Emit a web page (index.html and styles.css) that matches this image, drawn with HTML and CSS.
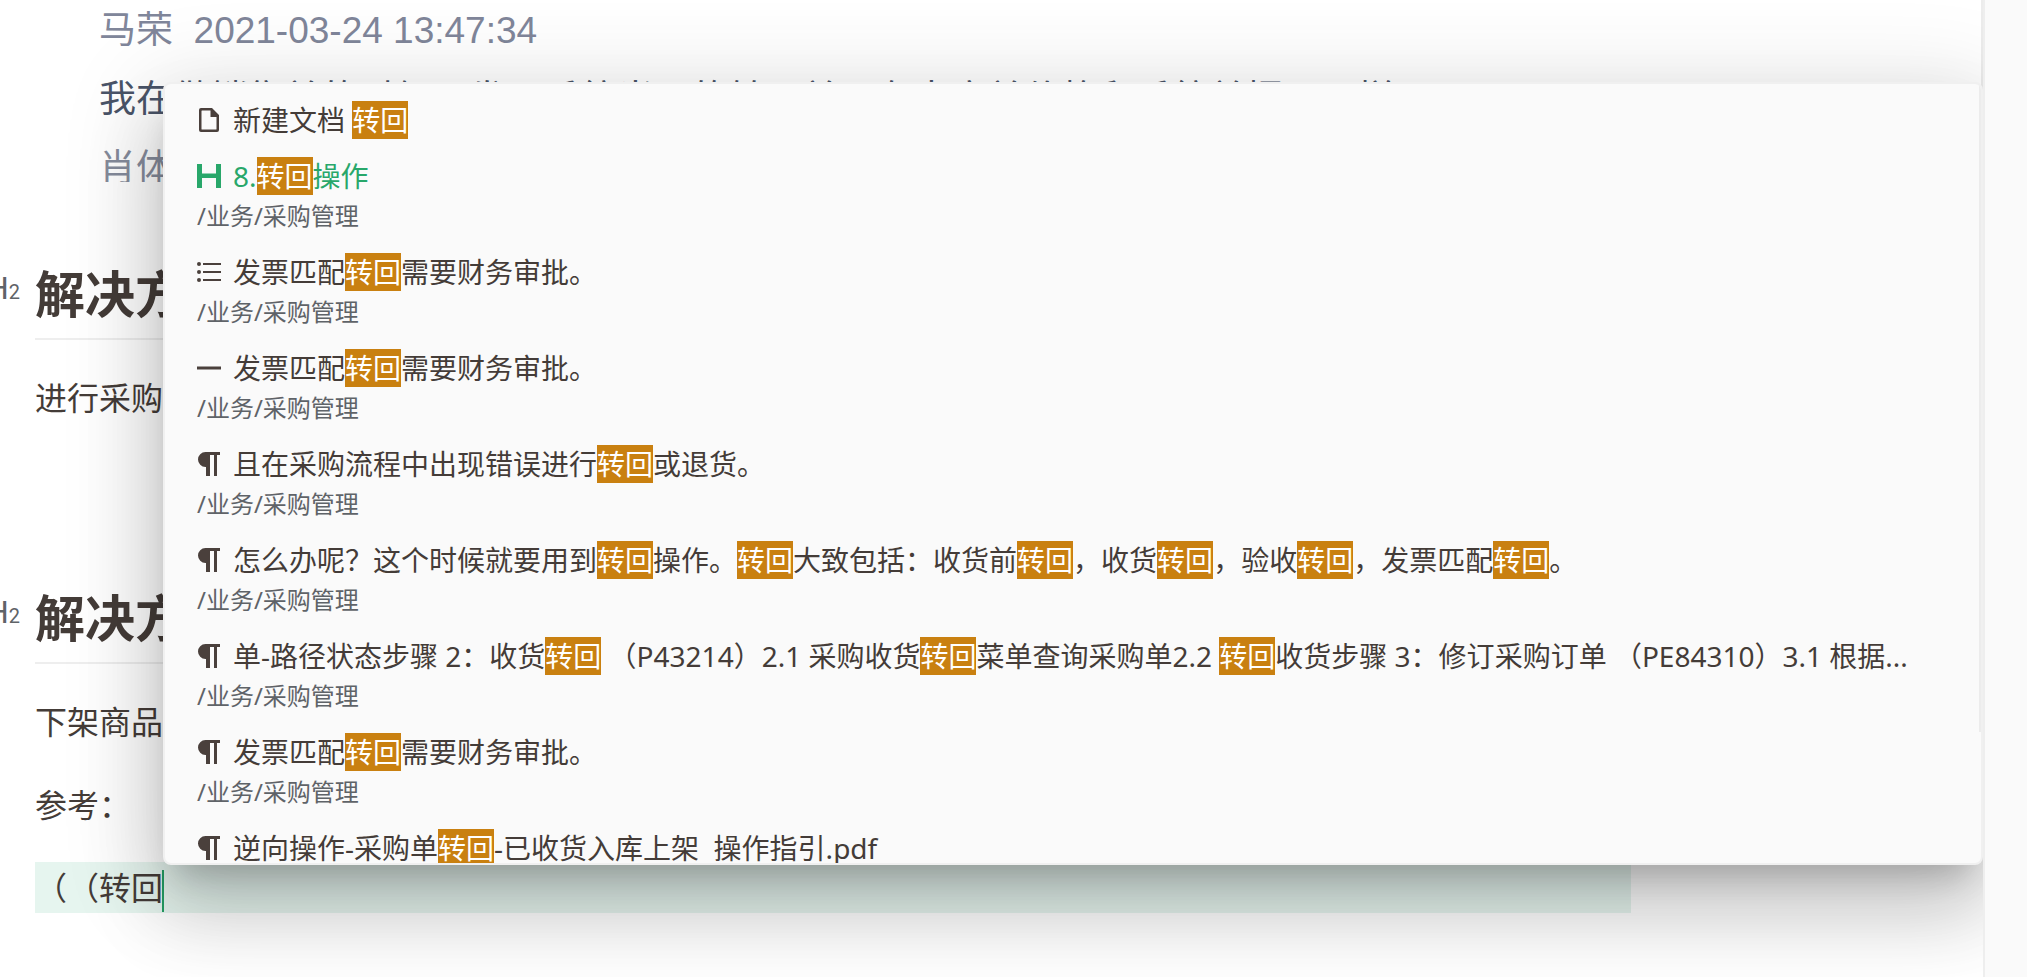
FILE: index.html
```html
<!DOCTYPE html>
<html lang="zh-CN">
<head>
<meta charset="utf-8">
<title>采购管理</title>
<link rel="stylesheet" href="styles.css">
</head>
<body>
<svg class="sprite" aria-hidden="true">
  <symbol id="i-doc" viewBox="0 0 24 24"><path fill-rule="evenodd" d="M4 0h11l7 7v15a2 2 0 0 1-2 2H4a2 2 0 0 1-2-2V2a2 2 0 0 1 2-2zm1 2.500a.5.5 0 0 0-.5.5v18a.5.500 0 0 0 .5.500h14a.5.500 0 0 0 .5-.5V9H13.500V2.500z"/></symbol>
  <symbol id="i-heading" viewBox="0 0 24 24"><path d="M0 0h5v9.500h14V0h5v24h-5v-10H5v10H0z"/></symbol>
  <symbol id="i-list" viewBox="0 0 24 24"><circle cx="2" cy="4" r="2"/><circle cx="2" cy="12" r="2"/><circle cx="2" cy="20" r="2"/><path d="M6 3h18v2H6zM6 11h18v2H6zM6 19h18v2H6z"/></symbol>
  <symbol id="i-item" viewBox="0 0 24 24"><path d="M0 10.500h24v3H0z"/></symbol>
  <symbol id="i-para" viewBox="0 0 24 24"><path d="M8.500 0H23v3h-3v21h-3V3h-4v21h-4V15H8.500a7.500 7.500 0 0 1 0-15z"/></symbol>
</svg>
<main class="editor">
  <article class="doc">
    <div class="quote">
      <p class="quote-meta">马荣&nbsp; 2021-03-24 13:47:34</p>
      <p class="quote-body">我在做销售单的时候，发现系统当月的转回单，有出库单价格和系统单据不一样</p>
      <p class="quote-foot">肖体</p>
    </div>
    <h2><span class="level">H<small>2</small></span>解决方案</h2>
    <p class="para wide">进行采购</p>
    <h2><span class="level">H<small>2</small></span>解决方案</h2>
    <p class="para">下架商品</p>
    <p class="para">参考：</p>
    <p class="para active">（（转回<span class="caret"></span></p>
  </article>
  <div class="thumb"></div>
  <div class="popup">
    <ul class="results">
      <li><button class="line"><svg><use href="#i-doc"/></svg><span>新建文档 <mark>转回</mark></span></button></li>
      <li class="current"><button class="line"><svg><use href="#i-heading"/></svg><span>8.<mark>转回</mark>操作</span></button><div class="path">/业务/采购管理</div></li>
      <li><button class="line"><svg><use href="#i-list"/></svg><span>发票匹配<mark>转回</mark>需要财务审批。</span></button><div class="path">/业务/采购管理</div></li>
      <li><button class="line"><svg><use href="#i-item"/></svg><span>发票匹配<mark>转回</mark>需要财务审批。</span></button><div class="path">/业务/采购管理</div></li>
      <li><button class="line"><svg><use href="#i-para"/></svg><span>且在采购流程中出现错误进行<mark>转回</mark>或退货。</span></button><div class="path">/业务/采购管理</div></li>
      <li><button class="line"><svg><use href="#i-para"/></svg><span>怎么办呢？这个时候就要用到<mark>转回</mark>操作。<mark>转回</mark>大致包括：收货前<mark>转回</mark>，收货<mark>转回</mark>，验收<mark>转回</mark>，发票匹配<mark>转回</mark>。</span></button><div class="path">/业务/采购管理</div></li>
      <li><button class="line"><svg><use href="#i-para"/></svg><span>单-路径状态步骤 2：收货<mark>转回</mark> （P43214）2.1 采购收货<mark>转回</mark>菜单查询采购单2.2 <mark>转回</mark>收货步骤 3：修订采购订单 （PE84310）3.1 根据...</span></button><div class="path">/业务/采购管理</div></li>
      <li><button class="line"><svg><use href="#i-para"/></svg><span>发票匹配<mark>转回</mark>需要财务审批。</span></button><div class="path">/业务/采购管理</div></li>
      <li><button class="line"><svg><use href="#i-para"/></svg><span>逆向操作-采购单<mark>转回</mark>-已收货入库上架&nbsp; 操作指引.pdf</span></button></li>
    </ul>
    <div class="popup-thumb"></div>
  </div>
</main>
<aside class="dock"></aside>
</body>
</html>
```
FILE: styles.css
```css
* { box-sizing: border-box; }
body {
  margin: 0;
  height: 100vh;
  display: flex;
  overflow: hidden;
  background: #fff;
  color: #443c38;
  font-family: "Noto Sans", "Noto Sans CJK SC", sans-serif;
  text-spacing-trim: space-all;
}
p, h2, ul { margin: 0; padding: 0; }
.sprite { position: absolute; width: 0; height: 0; }
.editor { position: relative; flex: 1; overflow: hidden; }
.dock { width: 44px; background: #fafafa; border-left: 2px solid #eee; }
.doc { padding: 0 352px 0 35px; }

.quote {
  height: 182px;
  padding-left: 64px;
  overflow: hidden;
  white-space: nowrap;
  font-family: "Liberation Sans", "Noto Sans CJK SC", sans-serif;
  font-size: 37px;
}
.quote p { line-height: 69px; }
.quote-meta { margin-top: -4px; color: #80869a; }
.quote-body { color: #4a5468; }
.quote-foot { color: #868c9c; }

h2 {
  position: relative;
  margin-top: 70px;
  height: 88px;
  line-height: 84px;
  font-size: 50px;
  border-bottom: 2px solid #eee;
}
.level {
  position: absolute;
  left: -49px;
  top: 20px;
  line-height: 32px;
  font-family: Roboto, sans-serif;
  font-size: 32px;
  font-weight: 400;
  color: #5f6368;
}
.level small { font-size: 20px; }
.para { margin-top: 32px; line-height: 51px; font-size: 32px; }
.wide { margin-bottom: 153px; }
.active { background: #e6f5ef; }
.caret {
  display: inline-block;
  width: 2px;
  height: 42px;
  margin-left: -1px;
  vertical-align: middle;
  background: #249f65;
}
.thumb {
  position: absolute;
  top: 0;
  right: 0;
  width: 2px;
  height: 400px;
  background: #ececec;
}

.popup {
  position: absolute;
  left: 163px;
  right: 0;
  top: 82px;
  bottom: 112px;
  overflow: hidden;
  background: #fafafa;
  border: 2px solid #f0f0f0;
  border-radius: 8px;
  box-shadow: 0 22px 30px -14px rgba(0, 0, 0, .2), 0 48px 76px 6px rgba(0, 0, 0, .14), 0 18px 92px 16px rgba(0, 0, 0, .12);
}
.popup-thumb {
  position: absolute;
  top: 0;
  right: 0;
  width: 2px;
  height: 648px;
  background: #ececec;
}
.results { padding: 8px 0; list-style: none; }
.results li { padding: 8px 32px; }
.line {
  display: flex;
  align-items: center;
  gap: 12px;
  width: 100%;
  height: 40px;
  padding: 0;
  border: 0;
  background: none;
  color: inherit;
  font: inherit;
  font-size: 28px;
  line-height: 40px;
  text-align: left;
  white-space: nowrap;
}
.line svg { flex: none; width: 24px; height: 24px; fill: #4a403c; }
.current .line { color: #28a76a; }
.current svg { fill: #28a76a; }
mark { background: #c98010; color: #fff; }
.path { font-size: 24px; line-height: 40px; color: #5f6368; }
```
